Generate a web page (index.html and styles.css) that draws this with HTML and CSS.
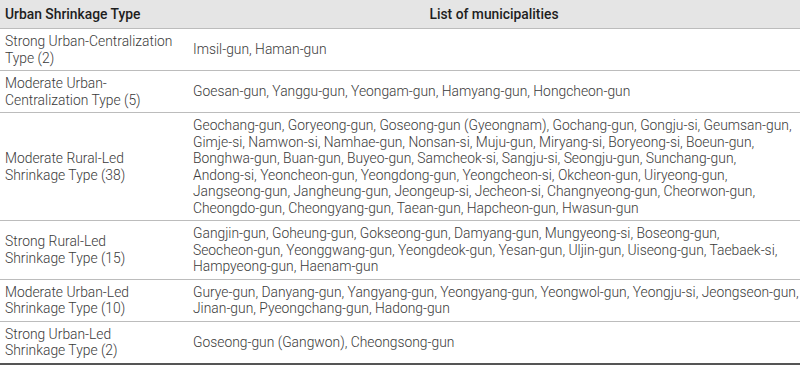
FILE: index.html
```html
<!DOCTYPE html>
<html>
<head>
<meta charset="utf-8">
<link rel="stylesheet" href="styles.css">
</head>
<body>
<table class="tbl">
  <thead>
    <tr>
      <th class="c1">Urban Shrinkage Type</th>
      <th class="c2">List of municipalities</th>
    </tr>
  </thead>
  <tbody>
    <tr>
      <td class="c1">Strong Urban-Centralization Type (2)</td>
      <td class="c2">Imsil-gun, Haman-gun</td>
    </tr>
    <tr>
      <td class="c1">Moderate Urban-<br>Centralization Type (5)</td>
      <td class="c2">Goesan-gun, Yanggu-gun, Yeongam-gun, Hamyang-gun, Hongcheon-gun</td>
    </tr>
    <tr>
      <td class="c1">Moderate Rural-Led<br>Shrinkage Type (38)</td>
      <td class="c2">Geochang-gun, Goryeong-gun, Goseong-gun (Gyeongnam), Gochang-gun, Gongju-si, Geumsan-gun,<br>Gimje-si, Namwon-si, Namhae-gun, Nonsan-si, Muju-gun, Miryang-si, Boryeong-si, Boeun-gun,<br>Bonghwa-gun, Buan-gun, Buyeo-gun, Samcheok-si, Sangju-si, Seongju-gun, Sunchang-gun,<br>Andong-si, Yeoncheon-gun, Yeongdong-gun, Yeongcheon-si, Okcheon-gun, Uiryeong-gun,<br>Jangseong-gun, Jangheung-gun, Jeongeup-si, Jecheon-si, Changnyeong-gun, Cheorwon-gun,<br>Cheongdo-gun, Cheongyang-gun, Taean-gun, Hapcheon-gun, Hwasun-gun</td>
    </tr>
    <tr>
      <td class="c1">Strong Rural-Led<br>Shrinkage Type (15)</td>
      <td class="c2">Gangjin-gun, Goheung-gun, Gokseong-gun, Damyang-gun, Mungyeong-si, Boseong-gun,<br>Seocheon-gun, Yeonggwang-gun, Yeongdeok-gun, Yesan-gun, Uljin-gun, Uiseong-gun, Taebaek-si,<br>Hampyeong-gun, Haenam-gun</td>
    </tr>
    <tr>
      <td class="c1">Moderate Urban-Led<br>Shrinkage Type (10)</td>
      <td class="c2">Gurye-gun, Danyang-gun, Yangyang-gun, Yeongyang-gun, Yeongwol-gun, Yeongju-si, Jeongseon-gun,<br>Jinan-gun, Pyeongchang-gun, Hadong-gun</td>
    </tr>
    <tr class="last">
      <td class="c1">Strong Urban-Led<br>Shrinkage Type (2)</td>
      <td class="c2">Goseong-gun (Gangwon), Cheongsong-gun</td>
    </tr>
  </tbody>
</table>
</body>
</html>
```
FILE: styles.css
```css
html, body {
  margin: 0;
  padding: 0;
  background: #ffffff;
}
.tbl {
  width: 800px;
  border-collapse: collapse;
  table-layout: fixed;
  font-family: Roboto, "Liberation Sans", sans-serif;
  font-weight: 300;
  font-size: 13.85px;
  line-height: 16.5px;
  color: #3a3a3a;
}
.tbl th {
  background: #e5e5e5;
  height: 28px;
  padding: 0 5px;
  font-weight: 500;
  color: #1e1e1e;
  vertical-align: middle;
}
.tbl th.c1 { text-align: left; width: 178px; }
.tbl th.c2 { text-align: center; }
.tbl td {
  padding: 4px 5px;
  vertical-align: middle;
  border-top: 1px solid #bcbcbc;
  text-align: left;
}
.tbl td.c2 {
  white-space: nowrap;
  padding-right: 0;
}
.tbl tr.last td { border-bottom: 2px solid #555555; }
```
